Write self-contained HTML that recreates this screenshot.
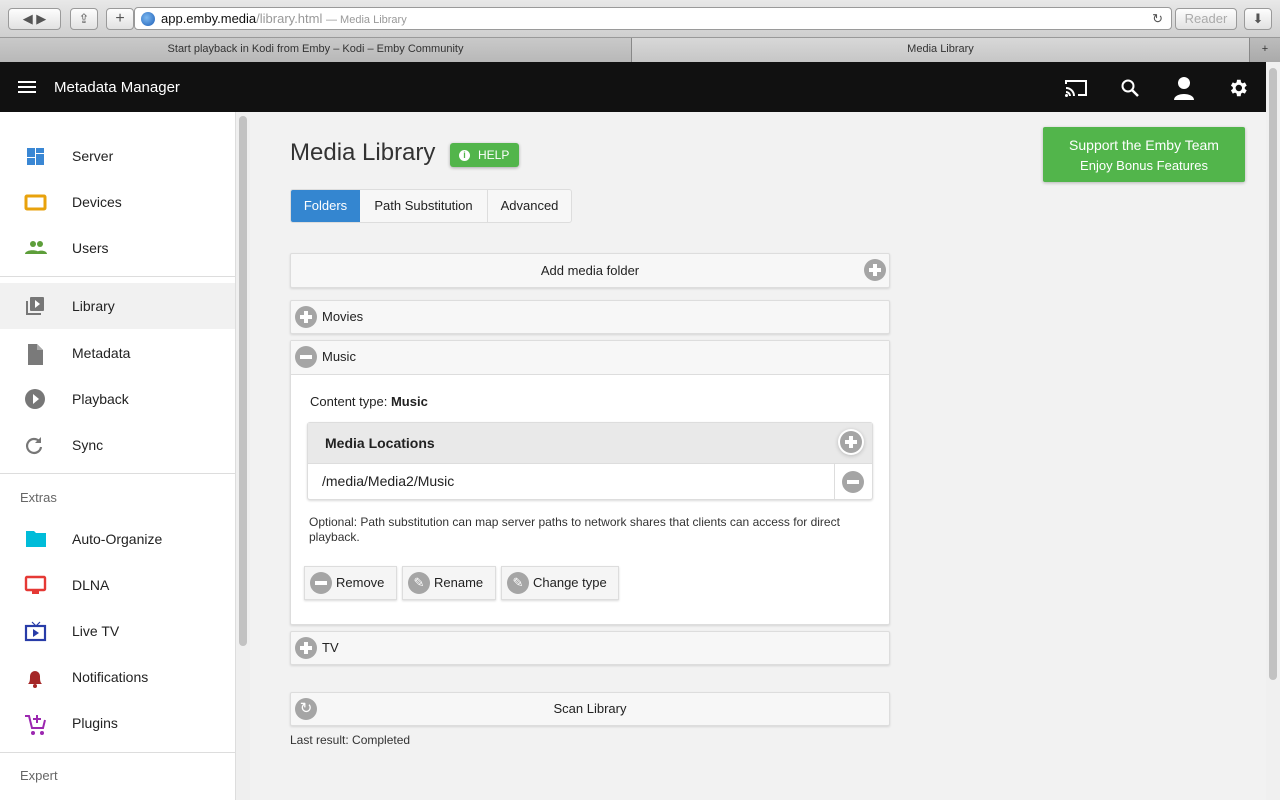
<!DOCTYPE html>
<html><head><style>
*{box-sizing:border-box;margin:0;padding:0}
body{width:1280px;height:800px;overflow:hidden;font-family:"Liberation Sans",sans-serif;background:#f2f2f2;position:relative;color:#222}
.abs{position:absolute}
.chrome{left:0;top:0;width:1280px;height:38px;background:linear-gradient(#e8e8e8,#cfcfcf);border-bottom:1px solid #999}
.btn{position:absolute;height:22px;border:1px solid #9a9a9a;border-radius:4px;background:linear-gradient(#fdfdfd,#e2e2e2);font-size:13px;color:#555;text-align:center;line-height:20px}
.url{left:134px;top:7px;width:1038px;height:23px;background:#fff;border:1px solid #9a9a9a;border-radius:4px;font-size:13px;line-height:21px;padding-left:26px;color:#111}
.tabs{left:0;top:38px;width:1280px;height:24px;background:linear-gradient(#bcbcbc,#aaa);font-size:11px;color:#333}
.tab{position:absolute;top:0;height:24px;line-height:22px;text-align:center;border-right:1px solid #888}
.hdr{left:0;top:62px;width:1266px;height:50px;background:#111;color:#fff}
.side{left:0;top:112px;width:235px;height:688px;background:#fff}
.item{position:absolute;left:0;width:235px;height:46px;font-size:14px;color:#222;line-height:46px;padding-left:72px}
.item svg{position:absolute;left:24px;top:13px}
.sep{position:absolute;left:0;width:235px;height:1px;background:#ddd}
.sec{position:absolute;left:20px;font-size:13px;color:#666}
.card{position:absolute;left:290px;width:600px;background:#f7f7f7;border:1px solid #ddd;border-radius:2px;box-shadow:0 1px 2px rgba(0,0,0,.12);font-size:13px}
.circ{position:absolute;width:22px;height:22px;border-radius:50%;background:#a5a5a5}
.circ:before,.circ.p:after{content:"";position:absolute;background:#fff;left:5px;top:9px;width:12px;height:4px}
.circ.p:after{left:9px;top:5px;width:4px;height:12px}
.sb{position:absolute;height:34px;top:566px;background:#f5f5f5;border:1px solid #ddd;box-shadow:0 1px 2px rgba(0,0,0,.15);font-size:13px;line-height:32px;padding-left:31px}
.sb .circ{left:5px;top:5px}
</style></head><body>
<div class="abs chrome">
 <div class="btn" style="left:8px;top:8px;width:53px">◀ ▶</div>
 <div class="btn" style="left:70px;top:8px;width:28px">⇪</div>
 <div class="btn" style="left:106px;top:8px;width:28px;font-size:16px">+</div>
 <div class="abs url"><span style="position:absolute;left:6px;top:4px;width:14px;height:14px;border-radius:50%;background:radial-gradient(circle at 40% 40%,#7cb8f0,#1d5fb8)"></span>app.emby.media<span style="color:#999">/library.html</span> <span style="color:#999;font-size:11px">— Media Library</span><span style="position:absolute;right:8px;color:#555">↻</span></div>
 <div class="btn" style="left:1175px;top:8px;width:62px;color:#aaa">Reader</div>
 <div class="btn" style="left:1244px;top:8px;width:28px">⬇</div>
</div>
<div class="abs tabs">
 <div class="tab" style="left:0;width:632px;background:linear-gradient(#c9c9c9,#b8b8b8)">Start playback in Kodi from Emby – Kodi – Emby Community</div>
 <div class="tab" style="left:632px;width:618px;background:linear-gradient(#d8d8d8,#c6c6c6)">Media Library</div>
 <div class="tab" style="left:1250px;width:30px;border:none">+</div>
</div>
<div class="abs hdr">
 <div class="abs" style="left:18px;top:19px;width:18px;height:2px;background:#fff;box-shadow:0 5px 0 #fff,0 10px 0 #fff"></div>
 <div class="abs" style="left:54px;top:17px;font-size:15px">Metadata Manager</div>
 <svg class="abs" style="left:1064px;top:16px" width="24" height="20" viewBox="0 0 24 20"><path d="M2 6V3h20v14h-8" fill="none" stroke="#fff" stroke-width="2"/><path d="M2 10a8 8 0 0 1 8 8M2 14a4 4 0 0 1 4 4" fill="none" stroke="#fff" stroke-width="2"/><circle cx="2.5" cy="17.5" r="1.5" fill="#fff"/></svg>
 <svg class="abs" style="left:1120px;top:16px" width="20" height="20"><circle cx="8" cy="8" r="5.5" fill="none" stroke="#fff" stroke-width="2"/><path d="M12 12l6 6" stroke="#fff" stroke-width="2.5"/></svg>
 <svg class="abs" style="left:1173px;top:14px" width="22" height="24"><circle cx="11" cy="7" r="6" fill="#fff"/><path d="M1 24c0-8 20-8 20 0z" fill="#fff"/></svg>
 <svg class="abs" style="left:1227px;top:15px" width="22" height="22" viewBox="0 0 24 24"><path fill="#fff" d="M19.4 13a7.5 7.5 0 0 0 0-2l2.1-1.6-2-3.5-2.5 1a7.5 7.5 0 0 0-1.7-1L14.9 3h-4l-.4 2.9a7.5 7.5 0 0 0-1.7 1l-2.5-1-2 3.5L6.4 11a7.5 7.5 0 0 0 0 2l-2.1 1.6 2 3.5 2.5-1a7.5 7.5 0 0 0 1.7 1l.4 2.9h4l.4-2.9a7.5 7.5 0 0 0 1.7-1l2.5 1 2-3.5zM12.9 15.5a3.5 3.5 0 1 1 0-7 3.5 3.5 0 0 1 0 7z"/></svg>
</div>
<div class="abs" style="left:1266px;top:62px;width:14px;height:738px;background:#f0f0f0"><div style="margin:6px 3px;height:612px;border-radius:4px;background:#c2c2c2"></div></div>
<div class="abs side">
 <div class="item" style="top:21px"><svg width="20" height="20"><rect x="3" y="2" width="8" height="9" fill="#3a87d4"/><rect x="12" y="2" width="8" height="5" fill="#3a87d4"/><rect x="3" y="12" width="8" height="7" fill="#3a87d4"/><rect x="12" y="8" width="8" height="11" fill="#3a87d4"/></svg>Server</div>
 <div class="item" style="top:67px"><svg width="24" height="20"><rect x="2" y="4" width="19" height="13" rx="1" fill="none" stroke="#e8a20c" stroke-width="3"/></svg>Devices</div>
 <div class="item" style="top:113px"><svg width="24" height="20"><circle cx="9" cy="6" r="3" fill="#5d9e3a"/><circle cx="16" cy="6" r="3" fill="#5d9e3a"/><path d="M1 16c0-5 15-5 15 0zM11 16c2-5 12-4 12 0z" fill="#5d9e3a"/></svg>Users</div>
 <div class="sep" style="top:164px"></div>
 <div class="item" style="top:171px;background:#f1f1f1"><svg width="24" height="20"><rect x="6" y="1" width="14" height="14" rx="1" fill="#777"/><path d="M11 4l5 4-5 4z" fill="#fff"/><path d="M3 5v13h14" fill="none" stroke="#777" stroke-width="2"/></svg>Library</div>
 <div class="item" style="top:218px"><svg width="24" height="22"><path d="M4 1h9l6 6v15H4z" fill="#7a7a7a"/><path d="M13 1v6h6" fill="#aaa"/></svg>Metadata</div>
 <div class="item" style="top:264px"><svg width="24" height="22"><circle cx="11" cy="10" r="10" fill="#777"/><path d="M9 5l6 5-6 5z" fill="#fff"/></svg>Playback</div>
 <div class="item" style="top:310px"><svg width="24" height="22"><path d="M17 12a7 7 0 1 1-2-6" fill="none" stroke="#777" stroke-width="2.2"/><path d="M17 2v6h-6z" fill="#777"/></svg>Sync</div>
 <div class="sep" style="top:361px"></div>
 <div class="sec" style="top:378px">Extras</div>
 <div class="item" style="top:404px"><svg width="24" height="20"><path d="M2 2h8l2 2h10v14H2z" fill="#00bcd9"/></svg>Auto-Organize</div>
 <div class="item" style="top:450px"><svg width="24" height="22"><rect x="2" y="2" width="19" height="13" rx="1" fill="none" stroke="#e53935" stroke-width="2.4"/><rect x="8" y="16" width="7" height="3" fill="#e53935"/></svg>DLNA</div>
 <div class="item" style="top:496px"><svg width="24" height="22"><rect x="2" y="5" width="19" height="14" fill="none" stroke="#283ca8" stroke-width="2.2"/><path d="M9 8l6 4-6 4z" fill="#283ca8"/><path d="M8 1l4 4 4-4" fill="none" stroke="#283ca8" stroke-width="1.2"/></svg>Live TV</div>
 <div class="item" style="top:542px"><svg width="24" height="22"><path d="M4 17c2-2 2-4 2-8a5 5 0 0 1 10 0c0 4 0 6 2 8z" fill="#a52727"/><circle cx="11" cy="19" r="2" fill="#a52727"/></svg>Notifications</div>
 <div class="item" style="top:588px"><svg width="24" height="24"><path d="M1 3h4l3 12h11l2-8" fill="none" stroke="#9c27b0" stroke-width="2"/><path d="M13 2v8M9 6h8" stroke="#9c27b0" stroke-width="2"/><circle cx="9" cy="20" r="2" fill="#9c27b0"/><circle cx="18" cy="20" r="2" fill="#9c27b0"/></svg>Plugins</div>
 <div class="sep" style="top:640px"></div>
 <div class="sec" style="top:656px">Expert</div>
</div>
<div class="abs" style="left:235px;top:112px;width:15px;height:688px;background:#efefef;border-left:1px solid #ddd"><div style="margin:4px 3px;height:530px;border-radius:4px;background:#c2c2c2"></div></div>

<div class="abs" style="left:290px;top:139px;font-size:24px;color:#333">Media Library</div>
<div class="abs" style="left:450px;top:143px;width:69px;height:24px;background:#52b54b;border-radius:3px;color:#fff;font-size:12px;line-height:24px;padding-left:28px;box-shadow:0 1px 3px rgba(0,0,0,.3)"><span style="position:absolute;left:9px;top:7px;width:11px;height:11px;border-radius:50%;background:#fff;color:#52b54b;font-size:9px;line-height:11px;text-align:center;font-weight:bold">i</span>HELP</div>
<div class="abs" style="left:1043px;top:127px;width:202px;height:55px;background:#52b54b;border-radius:2px;color:#fff;text-align:center;box-shadow:0 1px 3px rgba(0,0,0,.25)"><div style="font-size:14px;margin-top:10px">Support the Emby Team</div><div style="font-size:13px;margin-top:5px">Enjoy Bonus Features</div></div>

<div class="abs" style="left:290px;top:189px;height:34px;border:1px solid #ddd;border-radius:3px;display:flex;font-size:13px;line-height:32px;background:#f7f7f7;overflow:hidden">
 <div style="width:69px;background:#3486d0;color:#fff;text-align:center">Folders</div>
 <div style="width:128px;text-align:center;border-right:1px solid #ddd">Path Substitution</div>
 <div style="width:83px;text-align:center">Advanced</div>
</div>

<div class="card" style="top:253px;height:35px;text-align:center;line-height:33px">Add media folder<div class="circ p" style="left:573px;top:5px"></div></div>
<div class="card" style="top:300px;height:34px;line-height:32px;padding-left:31px">Movies<div class="circ p" style="left:4px;top:5px"></div></div>
<div class="card" style="top:340px;height:285px;background:#fff">
 <div style="height:34px;background:#f7f7f7;border-bottom:1px solid #ddd;line-height:32px;padding-left:31px;position:relative">Music<div class="circ" style="left:4px;top:5px"></div></div>
 <div style="position:absolute;left:19px;top:53px">Content type: <b>Music</b></div>
 <div style="position:absolute;left:16px;top:81px;width:566px;height:78px;border:1px solid #ddd;border-radius:3px;box-shadow:0 1px 2px rgba(0,0,0,.15);background:#fff">
  <div style="height:41px;background:#e9e9e9;border-bottom:1px solid #ddd;font-size:14px;font-weight:bold;line-height:41px;padding-left:17px;position:relative">Media Locations<div class="circ p" style="left:532px;top:8px;box-shadow:0 0 0 2px #fff,0 1px 4px 2px rgba(0,0,0,.2)"></div></div>
  <div style="height:35px;line-height:35px;padding-left:14px;font-size:14px;position:relative">/media/Media2/Music<div style="position:absolute;left:526px;top:0;width:1px;height:35px;background:#ddd"></div><div class="circ" style="left:534px;top:7px"></div></div>
 </div>
 <div style="position:absolute;left:18px;top:174px;width:560px;font-size:12px;line-height:15px;color:#333">Optional: Path substitution can map server paths to network shares that clients can access for direct playback.</div>
</div>
<div class="sb" style="left:304px;width:93px"><div class="circ"></div>Remove</div>
<div class="sb" style="left:402px;width:94px"><div class="circ"><span style="position:absolute;left:0;top:0;width:22px;color:#fff;text-align:center;line-height:22px;font-size:13px">✎</span></div>Rename</div>
<div class="sb" style="left:501px;width:118px"><div class="circ"><span style="position:absolute;left:0;top:0;width:22px;color:#fff;text-align:center;line-height:22px;font-size:13px">✎</span></div>Change type</div>
<style>.sb .circ:not(:empty):before{display:none}</style>
<div class="card" style="top:631px;height:34px;line-height:32px;padding-left:31px">TV<div class="circ p" style="left:4px;top:5px"></div></div>
<div class="card" style="top:692px;height:34px;line-height:32px;text-align:center">Scan Library<div class="circ" style="left:4px;top:5px"><span style="position:absolute;left:0;top:0;width:22px;color:#fff;text-align:center;line-height:22px;font-size:15px">↻</span></div></div>
<style>.card > .circ:not(:empty):before{display:none}</style>
<div class="abs" style="left:290px;top:733px;font-size:12px;color:#333">Last result: Completed</div>
</body></html>
